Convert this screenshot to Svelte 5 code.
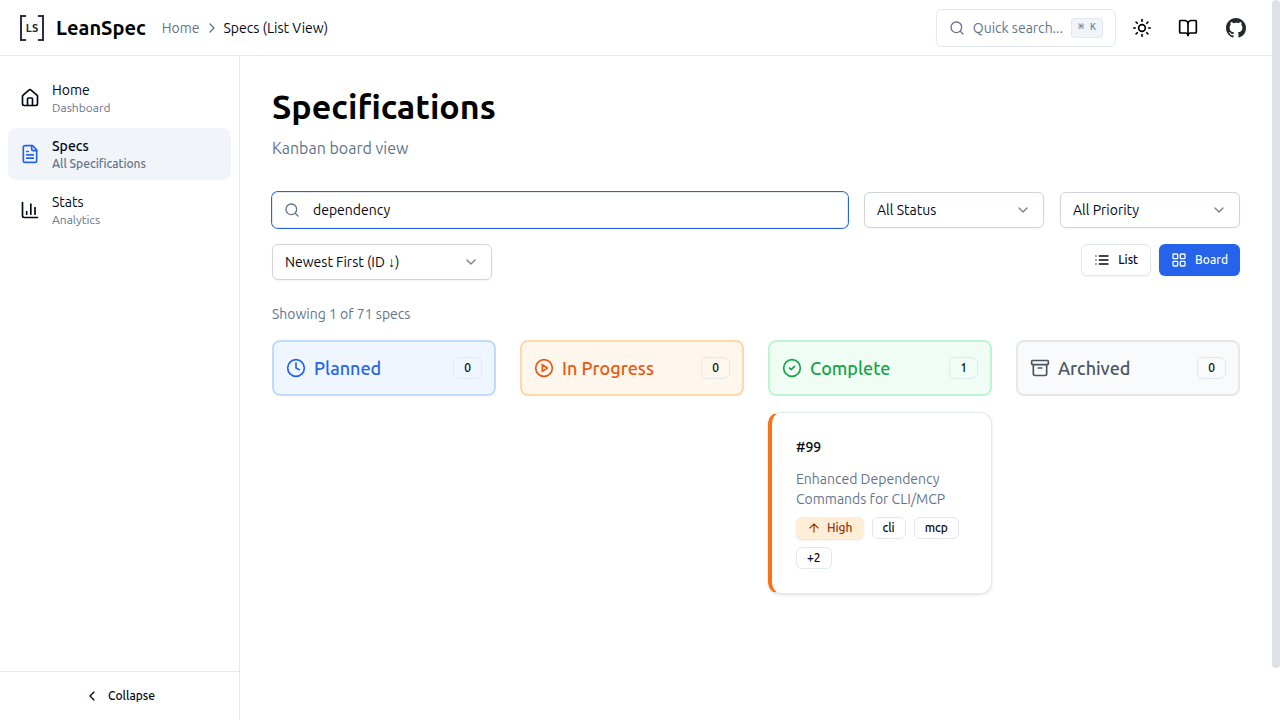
<script lang="ts">
	const nav = [
		{ title: "Home", sub: "Dashboard", icon: "home" },
		{ title: "Specs", sub: "All Specifications", icon: "file" },
		{ title: "Stats", sub: "Analytics", icon: "chart" },
	];

	const columns = [
		{ name: "Planned", tone: "blue", icon: "clock", specs: [] },
		{ name: "In Progress", tone: "orange", icon: "play", specs: [] },
		{
			name: "Complete",
			tone: "green",
			icon: "check",
			specs: [{ id: 99, title: "Enhanced Dependency Commands for CLI/MCP", priority: "High", tags: ["cli", "mcp", "+2"] }],
		},
		{ name: "Archived", tone: "gray", icon: "archive", specs: [] },
	];

	let active = $state("Specs");
	let view = $state("Board");
	let query = $state("dependency");
</script>

{#snippet icon(name: string, size: number)}
	<svg class="icon" width={size} height={size} viewBox="0 0 24 24" aria-hidden="true">
		{#if name === "home"}
			<path d="M15 21v-8a1 1 0 0 0-1-1h-4a1 1 0 0 0-1 1v8" />
			<path d="M3 10a2 2 0 0 1 .709-1.528l7-5.999a2 2 0 0 1 2.582 0l7 5.999A2 2 0 0 1 21 10v9a2 2 0 0 1-2 2H5a2 2 0 0 1-2-2z" />
		{:else if name === "file"}
			<path d="M15 2H6a2 2 0 0 0-2 2v16a2 2 0 0 0 2 2h12a2 2 0 0 0 2-2V7Z" />
			<path d="M14 2v4a2 2 0 0 0 2 2h4M10 9H8M16 13H8M16 17H8" />
		{:else if name === "chart"}
			<path d="M3 3v16a2 2 0 0 0 2 2h16M18 17V9M13 17V5M8 17v-3" />
		{:else if name === "search"}
			<circle cx="11" cy="11" r="8" />
			<path d="m21 21-4.3-4.3" />
		{:else if name === "sun"}
			<circle cx="12" cy="12" r="4" />
			<path d="M12 2v2M12 20v2m-7.07-17.07 1.41 1.41m11.32 11.32 1.41 1.41M2 12h2m16 0h2M6.34 17.66l-1.41 1.41M19.07 4.93l-1.41 1.41" />
		{:else if name === "book"}
			<path d="M12 7v14" />
			<path d="M3 18a1 1 0 0 1-1-1V4a1 1 0 0 1 1-1h5a4 4 0 0 1 4 4 4 4 0 0 1 4-4h5a1 1 0 0 1 1 1v13a1 1 0 0 1-1 1h-6a3 3 0 0 0-3 3 3 3 0 0 0-3-3z" />
		{:else if name === "right"}
			<path d="m9 18 6-6-6-6" />
		{:else if name === "left"}
			<path d="m15 18-6-6 6-6" />
		{:else if name === "down"}
			<path d="m6 9 6 6 6-6" />
		{:else if name === "list"}
			<path d="M3 12h.01M3 18h.01M3 6h.01M8 12h13M8 18h13M8 6h13" />
		{:else if name === "grid"}
			<rect width="7" height="7" x="3" y="3" rx="1" />
			<rect width="7" height="7" x="14" y="3" rx="1" />
			<rect width="7" height="7" x="14" y="14" rx="1" />
			<rect width="7" height="7" x="3" y="14" rx="1" />
		{:else if name === "clock"}
			<circle cx="12" cy="12" r="10" />
			<path d="M12 6v6l4 2" />
		{:else if name === "play"}
			<circle cx="12" cy="12" r="10" />
			<path d="m10 8 6 4-6 4z" />
		{:else if name === "check"}
			<circle cx="12" cy="12" r="10" />
			<path d="m9 12 2 2 4-4" />
		{:else if name === "archive"}
			<rect width="20" height="5" x="2" y="3" rx="1" />
			<path d="M4 8v11a2 2 0 0 0 2 2h12a2 2 0 0 0 2-2V8M10 12h4" />
		{:else if name === "up"}
			<path d="m5 12 7-7 7 7M12 19V5" />
		{/if}
	</svg>
{/snippet}

<div class="window">
	<div class="app">
		<header>
			<a class="brand" href="#home">
				<svg width="32" height="32" viewBox="0 0 32 32" aria-hidden="true">
					<path d="M10 4H5v24h5M22 4h5v24h-5" fill="none" stroke="#2d2d44" stroke-width="2" />
					<text x="16" y="20" text-anchor="middle">LS</text>
				</svg>
				<span>LeanSpec</span>
			</a>
			<nav class="crumbs" aria-label="Breadcrumb">
				<a href="#home">Home</a>
				{@render icon("right", 16)}
				<span>Specs (List View)</span>
			</nav>
			<div class="tools">
				<button class="quick">
					{@render icon("search", 16)}
					<span>Quick search...</span>
					<kbd>⌘ K</kbd>
				</button>
				<button class="tool theme" aria-label="Toggle theme">{@render icon("sun", 20)}</button>
				<a class="tool" href="#docs" aria-label="Documentation">{@render icon("book", 20)}</a>
				<a class="tool" href="#github" aria-label="GitHub">
					<svg width="20" height="20" viewBox="0 0 16 16" fill="#24292f" aria-hidden="true">
						<path d="M8 0C3.58 0 0 3.58 0 8c0 3.54 2.29 6.53 5.47 7.59.4.07.55-.17.55-.38 0-.19-.01-.82-.01-1.49-2.01.37-2.53-.49-2.69-.94-.09-.23-.48-.94-.82-1.13-.28-.15-.68-.52-.01-.53.63-.01 1.08.58 1.23.82.72 1.21 1.87.87 2.33.66.07-.52.28-.87.51-1.07-1.78-.2-3.64-.89-3.64-3.95 0-.87.31-1.59.82-2.15-.08-.2-.36-1.02.08-2.12 0 0 .67-.21 2.2.82A7.7 7.7 0 0 1 8 3.86c.68 0 1.36.09 2 .27 1.53-1.04 2.2-.82 2.2-.82.44 1.1.16 1.92.08 2.12.51.56.82 1.27.82 2.15 0 3.07-1.87 3.75-3.65 3.95.29.25.54.73.54 1.48 0 1.07-.01 1.93-.01 2.2 0 .21.15.46.55.38A8.01 8.01 0 0 0 16 8c0-4.42-3.58-8-8-8z" />
					</svg>
				</a>
			</div>
		</header>

		<div class="body">
			<aside>
				<nav class="menu" aria-label="Main">
					{#each nav as item}
						<a href="#{item.title.toLowerCase()}" class:active={active === item.title} onclick={() => (active = item.title)}>
							{@render icon(item.icon, 20)}
							<span class="label">
								<span>{item.title}</span>
								<small>{item.sub}</small>
							</span>
						</a>
					{/each}
				</nav>
				<div class="foot">
					<button>{@render icon("left", 16)}Collapse</button>
				</div>
			</aside>

			<main>
				<h1>Specifications</h1>
				<p class="lead">Kanban board view</p>

				<div class="filters">
					<label class="search">
						{@render icon("search", 16)}
						<input type="text" aria-label="Search specs" bind:value={query} />
					</label>
					<div class="select">
						<select aria-label="Status"><option>All Status</option></select>
						{@render icon("down", 16)}
					</div>
					<div class="select">
						<select aria-label="Priority"><option>All Priority</option></select>
						{@render icon("down", 16)}
					</div>
				</div>

				<div class="sorting">
					<div class="select wide">
						<select aria-label="Sort by"><option>Newest First (ID ↓)</option></select>
						{@render icon("down", 16)}
					</div>
					<div class="views">
						<button class:on={view === "List"} onclick={() => (view = "List")}>{@render icon("list", 16)}List</button>
						<button class:on={view === "Board"} onclick={() => (view = "Board")}>{@render icon("grid", 16)}Board</button>
					</div>
				</div>

				<p class="count">Showing 1 of 71 specs</p>

				<div class="board">
					{#each columns as col}
						<section>
							<div class="head {col.tone}">
								{@render icon(col.icon, 20)}
								<h2>{col.name}</h2>
								<span class="badge">{col.specs.length}</span>
							</div>
							{#each col.specs as spec}
								<article>
									<h3>#{spec.id}</h3>
									<p>{spec.title}</p>
									<div class="tags">
										<span class="badge high">{@render icon("up", 14)}{spec.priority}</span>
										{#each spec.tags as tag}
											<span class="badge">{tag}</span>
										{/each}
									</div>
								</article>
							{/each}
						</section>
					{/each}
				</div>
			</main>
		</div>
	</div>
	<div class="scroll"><div class="thumb"></div></div>
</div>

<style>
	:global(body) {
		margin: 0;
		background: #ffffff;
	}

	* {
		box-sizing: border-box;
	}

	.window {
		--border: #e2e8f0;
		--muted: #64748b;
		--primary: #2563eb;
		display: flex;
		min-height: 100vh;
		font-family: Ubuntu, "Open Sans", "Noto Sans", sans-serif;
		font-size: 14px;
		line-height: 20px;
		color: #020817;
	}

	.app {
		flex: 1;
		min-width: 0;
		display: flex;
		flex-direction: column;
	}

	.scroll {
		width: 8px;
		height: 100vh;
	}

	.thumb {
		height: 668px;
		border-radius: 4px;
		background: #dee2e6;
	}

	a {
		color: inherit;
		text-decoration: none;
	}

	button,
	input,
	select {
		font: inherit;
		color: inherit;
	}

	h1,
	h2,
	h3,
	p {
		margin: 0;
	}

	.icon {
		flex: none;
		fill: none;
		stroke: currentColor;
		stroke-width: 2;
		stroke-linecap: round;
		stroke-linejoin: round;
	}

	header {
		display: flex;
		align-items: center;
		height: 56px;
		padding: 0 16px;
		border-bottom: 1px solid var(--border);
	}

	.brand {
		display: flex;
		align-items: center;
		gap: 8px;
		font-size: 20px;
		font-weight: 700;
		color: #000000;
	}

	.brand text {
		font-size: 11px;
		font-weight: 600;
		fill: #1f2937;
	}

	.crumbs {
		display: flex;
		align-items: center;
		gap: 4px;
		margin-left: 16px;
		color: var(--muted);
	}

	.crumbs span {
		color: #020817;
	}

	.tools {
		display: flex;
		align-items: center;
		gap: 8px;
		margin-left: auto;
	}

	.quick {
		display: flex;
		align-items: center;
		gap: 8px;
		height: 38px;
		padding: 0 12px;
		border: 1px solid var(--border);
		border-radius: 6px;
		background: #ffffff;
		color: var(--muted);
	}

	kbd {
		height: 20px;
		padding: 0 6px;
		border: 1px solid var(--border);
		border-radius: 4px;
		background: #f1f5f9;
		font-family: "Liberation Mono", monospace;
		font-size: 10px;
		line-height: 18px;
	}

	.tool {
		display: flex;
		align-items: center;
		justify-content: center;
		width: 40px;
		height: 40px;
		padding: 0;
		border: 0;
		background: none;
		color: #000000;
	}

	.theme {
		width: 36px;
	}

	.body {
		flex: 1;
		display: flex;
	}

	aside {
		flex: none;
		display: flex;
		flex-direction: column;
		width: 240px;
		border-right: 1px solid var(--border);
	}

	.menu {
		flex: 1;
		display: flex;
		flex-direction: column;
		gap: 4px;
		padding: 16px 8px;
	}

	.menu a {
		display: flex;
		align-items: center;
		gap: 12px;
		padding: 8px 12px;
		border-radius: 8px;
	}

	.menu .label {
		display: flex;
		flex-direction: column;
	}

	small {
		font-size: 12px;
		line-height: 16px;
		color: var(--muted);
	}

	.menu .active {
		background: #f1f5f9;
		font-weight: 500;
	}

	.menu .active .icon {
		color: var(--primary);
	}

	.foot {
		padding: 8px;
		border-top: 1px solid var(--border);
	}

	.foot button {
		display: flex;
		align-items: center;
		justify-content: center;
		gap: 8px;
		width: 100%;
		height: 32px;
		border: 0;
		background: none;
		font-size: 12px;
		font-weight: 500;
	}

	main {
		flex: 1;
		min-width: 0;
		padding: 32px;
	}

	h1 {
		font-size: 34px;
		line-height: 36px;
		font-weight: 700;
		color: #000000;
	}

	.lead {
		margin-top: 12px;
		font-size: 16px;
		line-height: 24px;
		color: var(--muted);
	}

	.filters {
		display: flex;
		gap: 16px;
		margin-top: 32px;
	}

	.search {
		flex: 1;
		display: flex;
		align-items: center;
		gap: 13px;
		height: 36px;
		padding: 0 11px;
		border: 1px solid var(--border);
		border-radius: 6px;
		box-shadow: 0 0 0 1px var(--primary);
		color: var(--muted);
	}

	.search input {
		flex: 1;
		min-width: 0;
		padding: 0;
		border: 0;
		outline: none;
		background: none;
		color: #020817;
	}

	.select {
		display: grid;
		align-items: center;
		width: 180px;
		height: 36px;
	}

	.select.wide {
		width: 220px;
	}

	.select select {
		grid-area: 1 / 1;
		height: 36px;
		padding: 0 36px 0 12px;
		border: 1px solid #d1d5db;
		border-radius: 6px;
		background: #ffffff;
		box-shadow: 0 1px 2px rgba(0, 0, 0, 0.05);
		appearance: none;
	}

	.select .icon {
		grid-area: 1 / 1;
		justify-self: end;
		margin-right: 13px;
		color: #808080;
		pointer-events: none;
	}

	.sorting {
		display: flex;
		justify-content: space-between;
		align-items: flex-start;
		margin-top: 16px;
	}

	.views {
		display: flex;
		gap: 8px;
	}

	.views button {
		display: flex;
		align-items: center;
		gap: 8px;
		height: 32px;
		padding: 0 12px;
		border: 1px solid var(--border);
		border-radius: 6px;
		background: #ffffff;
		box-shadow: 0 1px 2px rgba(0, 0, 0, 0.05);
		font-size: 12px;
		font-weight: 500;
	}

	.views .on {
		border: 0;
		background: var(--primary);
		color: #f8fafc;
	}

	.count {
		margin-top: 24px;
		color: var(--muted);
	}

	.board {
		display: grid;
		grid-template-columns: repeat(4, 1fr);
		gap: 24px;
		margin-top: 16px;
	}

	.head {
		display: flex;
		align-items: center;
		gap: 8px;
		height: 56px;
		padding: 12px;
		border: 2px solid;
		border-radius: 8px;
	}

	h2 {
		flex: 1;
		font-size: 18px;
		line-height: 28px;
		font-weight: 550;
	}

	.blue {
		color: #2563eb;
		background: #eff6ff;
		border-color: #bfdbfe;
	}

	.orange {
		color: #ea580c;
		background: #fff7ed;
		border-color: #fed7aa;
	}

	.green {
		color: #16a34a;
		background: #f0fdf4;
		border-color: #bbf7d0;
	}

	.gray {
		color: #4b5563;
		background: #f9fafb;
		border-color: #e5e7eb;
	}

	.badge {
		display: flex;
		align-items: center;
		height: 22px;
		padding: 0 10px;
		border: 1px solid var(--border);
		border-radius: 6px;
		font-size: 12px;
		line-height: 16px;
		font-weight: 550;
		color: #020817;
	}

	article {
		margin-top: 16px;
		padding: 24px;
		border: 1px solid var(--border);
		border-left: 4px solid #f97316;
		border-radius: 12px;
		box-shadow: 0 1px 3px rgba(0, 0, 0, 0.12);
	}

	h3 {
		font-size: 14px;
		line-height: 20px;
		font-weight: 500;
	}

	article p {
		margin-top: 12px;
		color: var(--muted);
	}

	.tags {
		display: flex;
		flex-wrap: wrap;
		gap: 8px;
		margin-top: 8px;
	}

	.high {
		gap: 6px;
		border-color: #ffedd5;
		background: #ffedd5;
		color: #9a3412;
		box-shadow: 0 1px 2px rgba(0, 0, 0, 0.12);
	}
</style>
